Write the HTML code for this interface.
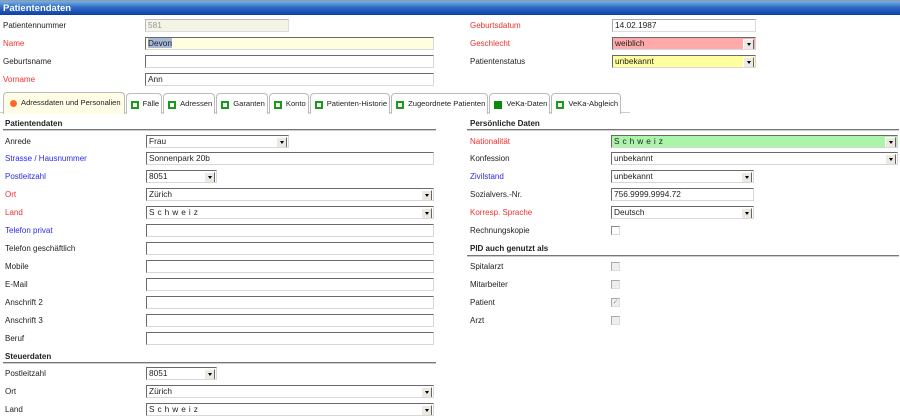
<!DOCTYPE html>
<html><head><meta charset="utf-8"><style>
*{margin:0;padding:0;box-sizing:border-box}
body{width:900px;height:415px;overflow:hidden;background:#fff;font-family:"Liberation Sans",Arial,sans-serif;font-size:8px;color:#222;position:relative}
.t{position:absolute;left:0;top:0;width:900px;height:15px;background:linear-gradient(#7ab0e0,#2f6cc4 45%,#0d3fa6);color:#fff;font-weight:bold;font-size:9.5px;line-height:15px;padding-left:3px;border-top:1px solid #8a9cb0}
.l{position:absolute;font-size:8px;line-height:12px;white-space:nowrap;margin-top:1px}
.r{color:#f03030}.b{color:#2a2af0}
.h{position:absolute;font-weight:bold;font-size:8px;line-height:12px;margin-top:1px}
.hr{position:absolute;height:2px;background:#777;border-bottom:1px solid #ccc}
.i{position:absolute;height:13px;border:1px solid;border-color:#6a6a6a #d8d8d8 #d8d8d8 #6a6a6a;background:#fff;font-size:8.3px;line-height:11px;padding-left:2px;white-space:nowrap;overflow:hidden}
.s:after{content:"";position:absolute;right:1px;top:1px;width:9px;height:9px;background:#ece9e2;border:1px solid;border-color:#fff #666 #666 #fff}
.s:before{content:"";position:absolute;right:4px;top:5px;border:2px solid transparent;border-top:3px solid #000;z-index:2}
.c{position:absolute;width:9px;height:9px;border:1px solid;border-color:#888 #ddd #ddd #888;background:#fff}
.cd{background:#eee;border-color:#aaa #ddd #ddd #aaa}
.tabs{position:absolute;left:3px;top:92px;display:flex;align-items:flex-end}
.tab{position:relative;height:21px;border:1px solid #bbb;border-bottom:none;border-radius:4px 4px 0 0;background:#fff;font-size:7.6px;line-height:20px;padding:0 2px 0 16px;white-space:nowrap;margin-right:1px}
.tab i{position:absolute;left:4px;top:7px;width:8px;height:8px;border:2px solid #1a9a1a}
.tb{position:absolute;left:0;top:112px;width:630px;height:1px;background:#ccc}
</style></head><body>
<div class="t">Patientendaten</div>

<div class="l" style="left:3px;top:19px">Patientennummer</div>
<div class="i" style="left:145px;top:19px;width:144px;background:#f5f3e6;color:#999;border-color:#bbb #ddd #ddd #bbb">581</div>
<div class="l r" style="left:3px;top:37px">Name</div>
<div class="i" style="left:145px;top:37px;width:289px;background:#ffffe0"><span style="background:#a8b8d8">Devon</span></div>
<div class="l" style="left:3px;top:55px">Geburtsname</div>
<div class="i" style="left:145px;top:55px;width:289px"></div>
<div class="l r" style="left:3px;top:73px">Vorname</div>
<div class="i" style="left:145px;top:73px;width:289px">Ann</div>

<div class="l r" style="left:470px;top:19px">Geburtsdatum</div>
<div class="i" style="left:612px;top:19px;width:144px;border-color:#aaa #ddd #ddd #aaa">14.02.1987</div>
<div class="l r" style="left:470px;top:37px">Geschlecht</div>
<div class="i s" style="left:612px;top:37px;width:144px;background:#ffaaaa">weiblich</div>
<div class="l" style="left:470px;top:55px">Patientenstatus</div>
<div class="i s" style="left:612px;top:55px;width:144px;background:#ffffa0">unbekannt</div>

<div class="tb"></div>
<div class="tabs">
<div class="tab" style="background:#fffde6;height:22px;padding-left:17px;padding-right:3px"><b style="position:absolute;left:6px;top:7px;width:7px;height:7px;border-radius:50%;background:#ff6a2a"></b>Adressdaten und Personalien</div>
<div class="tab"><i></i>Fälle</div>
<div class="tab"><i></i>Adressen</div>
<div class="tab"><i></i>Garanten</div>
<div class="tab"><i></i>Konto</div>
<div class="tab"><i></i>Patienten-Historie</div>
<div class="tab"><i></i>Zugeordnete Patienten</div>
<div class="tab"><i style="background:#0a8a0a;border-color:#0a8a0a"></i>VeKa-Daten</div>
<div class="tab"><i></i>VeKa-Abgleich</div>
</div>

<div class="h" style="left:5px;top:117px">Patientendaten</div>
<div class="hr" style="left:3px;top:129px;width:433px"></div>
<div class="l" style="left:5px;top:135px">Anrede</div>
<div class="i s" style="left:146px;top:135px;width:143px">Frau</div>
<div class="l b" style="left:5px;top:152px">Strasse / Hausnummer</div>
<div class="i" style="left:146px;top:152px;width:288px">Sonnenpark 20b</div>
<div class="l b" style="left:5px;top:170px">Postleitzahl</div>
<div class="i s" style="left:146px;top:170px;width:71px">8051</div>
<div class="l r" style="left:5px;top:188px">Ort</div>
<div class="i s" style="left:146px;top:188px;width:288px">Zürich</div>
<div class="l r" style="left:5px;top:206px">Land</div>
<div class="i s" style="left:146px;top:206px;width:288px;letter-spacing:3px">Schweiz</div>
<div class="l b" style="left:5px;top:224px">Telefon privat</div>
<div class="i" style="left:146px;top:224px;width:288px"></div>
<div class="l" style="left:5px;top:242px">Telefon geschäftlich</div>
<div class="i" style="left:146px;top:242px;width:288px"></div>
<div class="l" style="left:5px;top:260px">Mobile</div>
<div class="i" style="left:146px;top:260px;width:288px"></div>
<div class="l" style="left:5px;top:278px">E-Mail</div>
<div class="i" style="left:146px;top:278px;width:288px"></div>
<div class="l" style="left:5px;top:296px">Anschrift 2</div>
<div class="i" style="left:146px;top:296px;width:288px"></div>
<div class="l" style="left:5px;top:314px">Anschrift 3</div>
<div class="i" style="left:146px;top:314px;width:288px"></div>
<div class="l" style="left:5px;top:332px">Beruf</div>
<div class="i" style="left:146px;top:332px;width:288px"></div>
<div class="h" style="left:5px;top:350px">Steuerdaten</div>
<div class="hr" style="left:3px;top:362px;width:433px"></div>
<div class="l" style="left:5px;top:367px">Postleitzahl</div>
<div class="i s" style="left:146px;top:367px;width:71px">8051</div>
<div class="l" style="left:5px;top:385px">Ort</div>
<div class="i s" style="left:146px;top:385px;width:288px">Zürich</div>
<div class="l" style="left:5px;top:403px">Land</div>
<div class="i s" style="left:146px;top:403px;width:288px;letter-spacing:3px">Schweiz</div>

<div class="h" style="left:470px;top:117px">Persönliche Daten</div>
<div class="hr" style="left:467px;top:129px;width:432px"></div>
<div class="l r" style="left:470px;top:135px">Nationalität</div>
<div class="i s" style="left:611px;top:135px;width:287px;background:#aaf5aa;letter-spacing:3px">Schweiz</div>
<div class="l" style="left:470px;top:152px">Konfession</div>
<div class="i s" style="left:611px;top:152px;width:287px">unbekannt</div>
<div class="l b" style="left:470px;top:170px">Zivilstand</div>
<div class="i s" style="left:611px;top:170px;width:143px">unbekannt</div>
<div class="l" style="left:470px;top:188px">Sozialvers.-Nr.</div>
<div class="i" style="left:611px;top:188px;width:143px">756.9999.9994.72</div>
<div class="l r" style="left:470px;top:206px">Korresp. Sprache</div>
<div class="i s" style="left:611px;top:206px;width:143px">Deutsch</div>
<div class="l" style="left:470px;top:224px">Rechnungskopie</div>
<div class="c" style="left:611px;top:226px"></div>
<div class="h" style="left:470px;top:242px">PID auch genutzt als</div>
<div class="hr" style="left:467px;top:255px;width:432px"></div>
<div class="l" style="left:470px;top:260px">Spitalarzt</div>
<div class="c cd" style="left:611px;top:262px"></div>
<div class="l" style="left:470px;top:278px">Mitarbeiter</div>
<div class="c cd" style="left:611px;top:280px"></div>
<div class="l" style="left:470px;top:296px">Patient</div>
<div class="c cd" style="left:611px;top:298px;font-size:7px;line-height:7px;color:#999;text-align:center">✓</div>
<div class="l" style="left:470px;top:314px">Arzt</div>
<div class="c cd" style="left:611px;top:316px"></div>
</body></html>
